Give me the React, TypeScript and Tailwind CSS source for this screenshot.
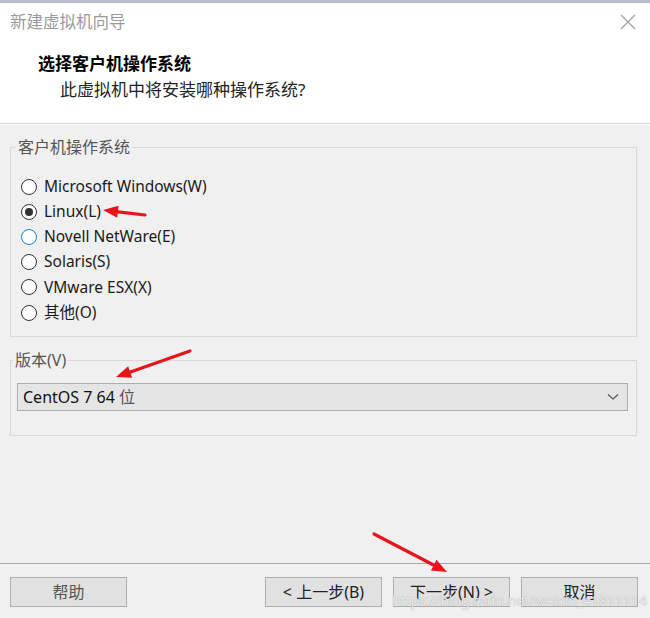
const FONT = "font-['Noto_Sans','Noto_Sans_CJK_SC',sans-serif]";

type Option = { label: string; checked?: boolean; hover?: boolean };

const OS_OPTIONS: Option[] = [
  { label: "Microsoft Windows(W)" },
  { label: "Linux(L)", checked: true },
  { label: "Novell NetWare(E)", hover: true },
  { label: "Solaris(S)" },
  { label: "VMware ESX(X)" },
  { label: "其他(O)" },
];

function Radio({ label, checked, hover }: Option) {
  return (
    <div className="flex h-[25.2px] items-center">
      <span
        className={
          "flex h-[16px] w-[16px] items-center justify-center rounded-full border bg-white " +
          (hover ? "border-[#1a7fd4]" : "border-[#333333]")
        }
      >
        {checked ? <span className="h-[8px] w-[8px] rounded-full bg-[#333333]" /> : null}
      </span>
      <span className="ml-[7px] text-[15.5px] leading-none text-[#1a1a1a]">{label}</span>
    </div>
  );
}

function Button({ children, className = "" }: { children: React.ReactNode; className?: string }) {
  return (
    <button
      className={
        "flex h-[30px] w-[117px] items-center justify-center border border-[#adadad] bg-[#e1e1e1] text-[16px] text-[#222222] " +
        className
      }
    >
      {children}
    </button>
  );
}

// red annotation arrow from (x1,y1) to the tip (x2,y2)
function Arrow({ x1, y1, x2, y2 }: { x1: number; y1: number; x2: number; y2: number }) {
  const dx = x2 - x1;
  const dy = y2 - y1;
  const len = Math.hypot(dx, dy);
  const ux = dx / len;
  const uy = dy / len;
  const head = 15;
  const half = 6;
  const bx = x2 - ux * head;
  const by = y2 - uy * head;
  const p1 = `${bx - uy * half},${by + ux * half}`;
  const p2 = `${bx + uy * half},${by - ux * half}`;
  return (
    <g>
      <line x1={x1} y1={y1} x2={bx + ux * 2} y2={by + uy * 2} stroke="#e8141b" strokeWidth={3.2} strokeLinecap="round" />
      <polygon points={`${x2},${y2} ${p1} ${p2}`} fill="#e8141b" />
    </g>
  );
}

export default function App() {
  return (
    <div className={`relative flex h-[618px] w-[650px] flex-col overflow-hidden bg-[#f0f0f0] ${FONT}`}>
      <div className="h-[3px] bg-[#b7bfcf]" />

      <div className="h-[121px] border-b border-[#d4d4d4] bg-white">
        <div className="mt-[9px] flex items-center justify-between pl-[10px] pr-[14px]">
          <span className="text-[16.5px] leading-[20px] text-[#9a9a9a]">新建虚拟机向导</span>
          <svg width="16" height="16" viewBox="0 0 16 16">
            <path d="M1 1 L15 15 M15 1 L1 15" stroke="#a0a0a0" strokeWidth="1.2" fill="none" />
          </svg>
        </div>
        <div className="ml-[38px] mt-[21px] text-[17px] font-bold leading-[22px] text-black">选择客户机操作系统</div>
        <div className="ml-[60px] mt-[4px] text-[17px] leading-[22px] text-[#222222]">此虚拟机中将安装哪种操作系统?</div>
      </div>
      <div className="h-px bg-white" />

      <fieldset className="ml-[10px] mr-[13px] mt-[11px] border border-[#d9d9d9]">
        <legend className="ml-[5px] px-[2px] text-[16px] leading-[22px] text-[#555555]">客户机操作系统</legend>
        <div className="pb-[11px] pl-[10px] pt-[16px]">
          {OS_OPTIONS.map((o) => (
            <Radio key={o.label} {...o} />
          ))}
        </div>
      </fieldset>

      <fieldset className="ml-[10px] mr-[13px] mt-[12px] border border-[#d9d9d9]">
        <legend className="ml-[2px] px-[2px] text-[16px] leading-[22px] text-[#555555]">版本(V)</legend>
        <div className="pb-[24px] pl-[6px] pr-[8px] pt-[12px]">
          <div className="flex h-[28px] items-center justify-between border border-[#adadad] bg-[#e5e5e5] pl-[5px] pr-[8px]">
            <span className="text-[16px] text-[#111111]">
              CentOS 7 64 <span className="text-[#555555]">位</span>
            </span>
            <svg width="12" height="8" viewBox="0 0 12 8">
              <path d="M1 1.5 L6 6 L11 1.5" stroke="#555555" strokeWidth="1.2" fill="none" />
            </svg>
          </div>
        </div>
      </fieldset>

      <div className="flex-1" />

      <div className="flex h-[55px] items-start border-t border-[#a8a8a8] pt-[13px]">
        <Button className="ml-[10px] text-[#555555]">帮助</Button>
        <div className="flex-1" />
        <div className="mr-[12px] flex gap-[11px]">
          <Button>&lt; 上一步(B)</Button>
          <Button>下一步(N) &gt;</Button>
          <Button>取消</Button>
        </div>
      </div>

      <div className="pointer-events-none absolute left-[392px] top-[590px] text-[14px] leading-[22px] text-white/80 [text-shadow:0_0_1px_#8a8a8a]">
        https://blog.csdn.net/weixin_41811114
      </div>

      <svg className="pointer-events-none absolute inset-0" width="650" height="618">
        <Arrow x1={145} y1={215} x2={103} y2={210} />
        <Arrow x1={190} y1={351} x2={116} y2={377} />
        <Arrow x1={374} y1={534} x2={447} y2={572} />
      </svg>
    </div>
  );
}
